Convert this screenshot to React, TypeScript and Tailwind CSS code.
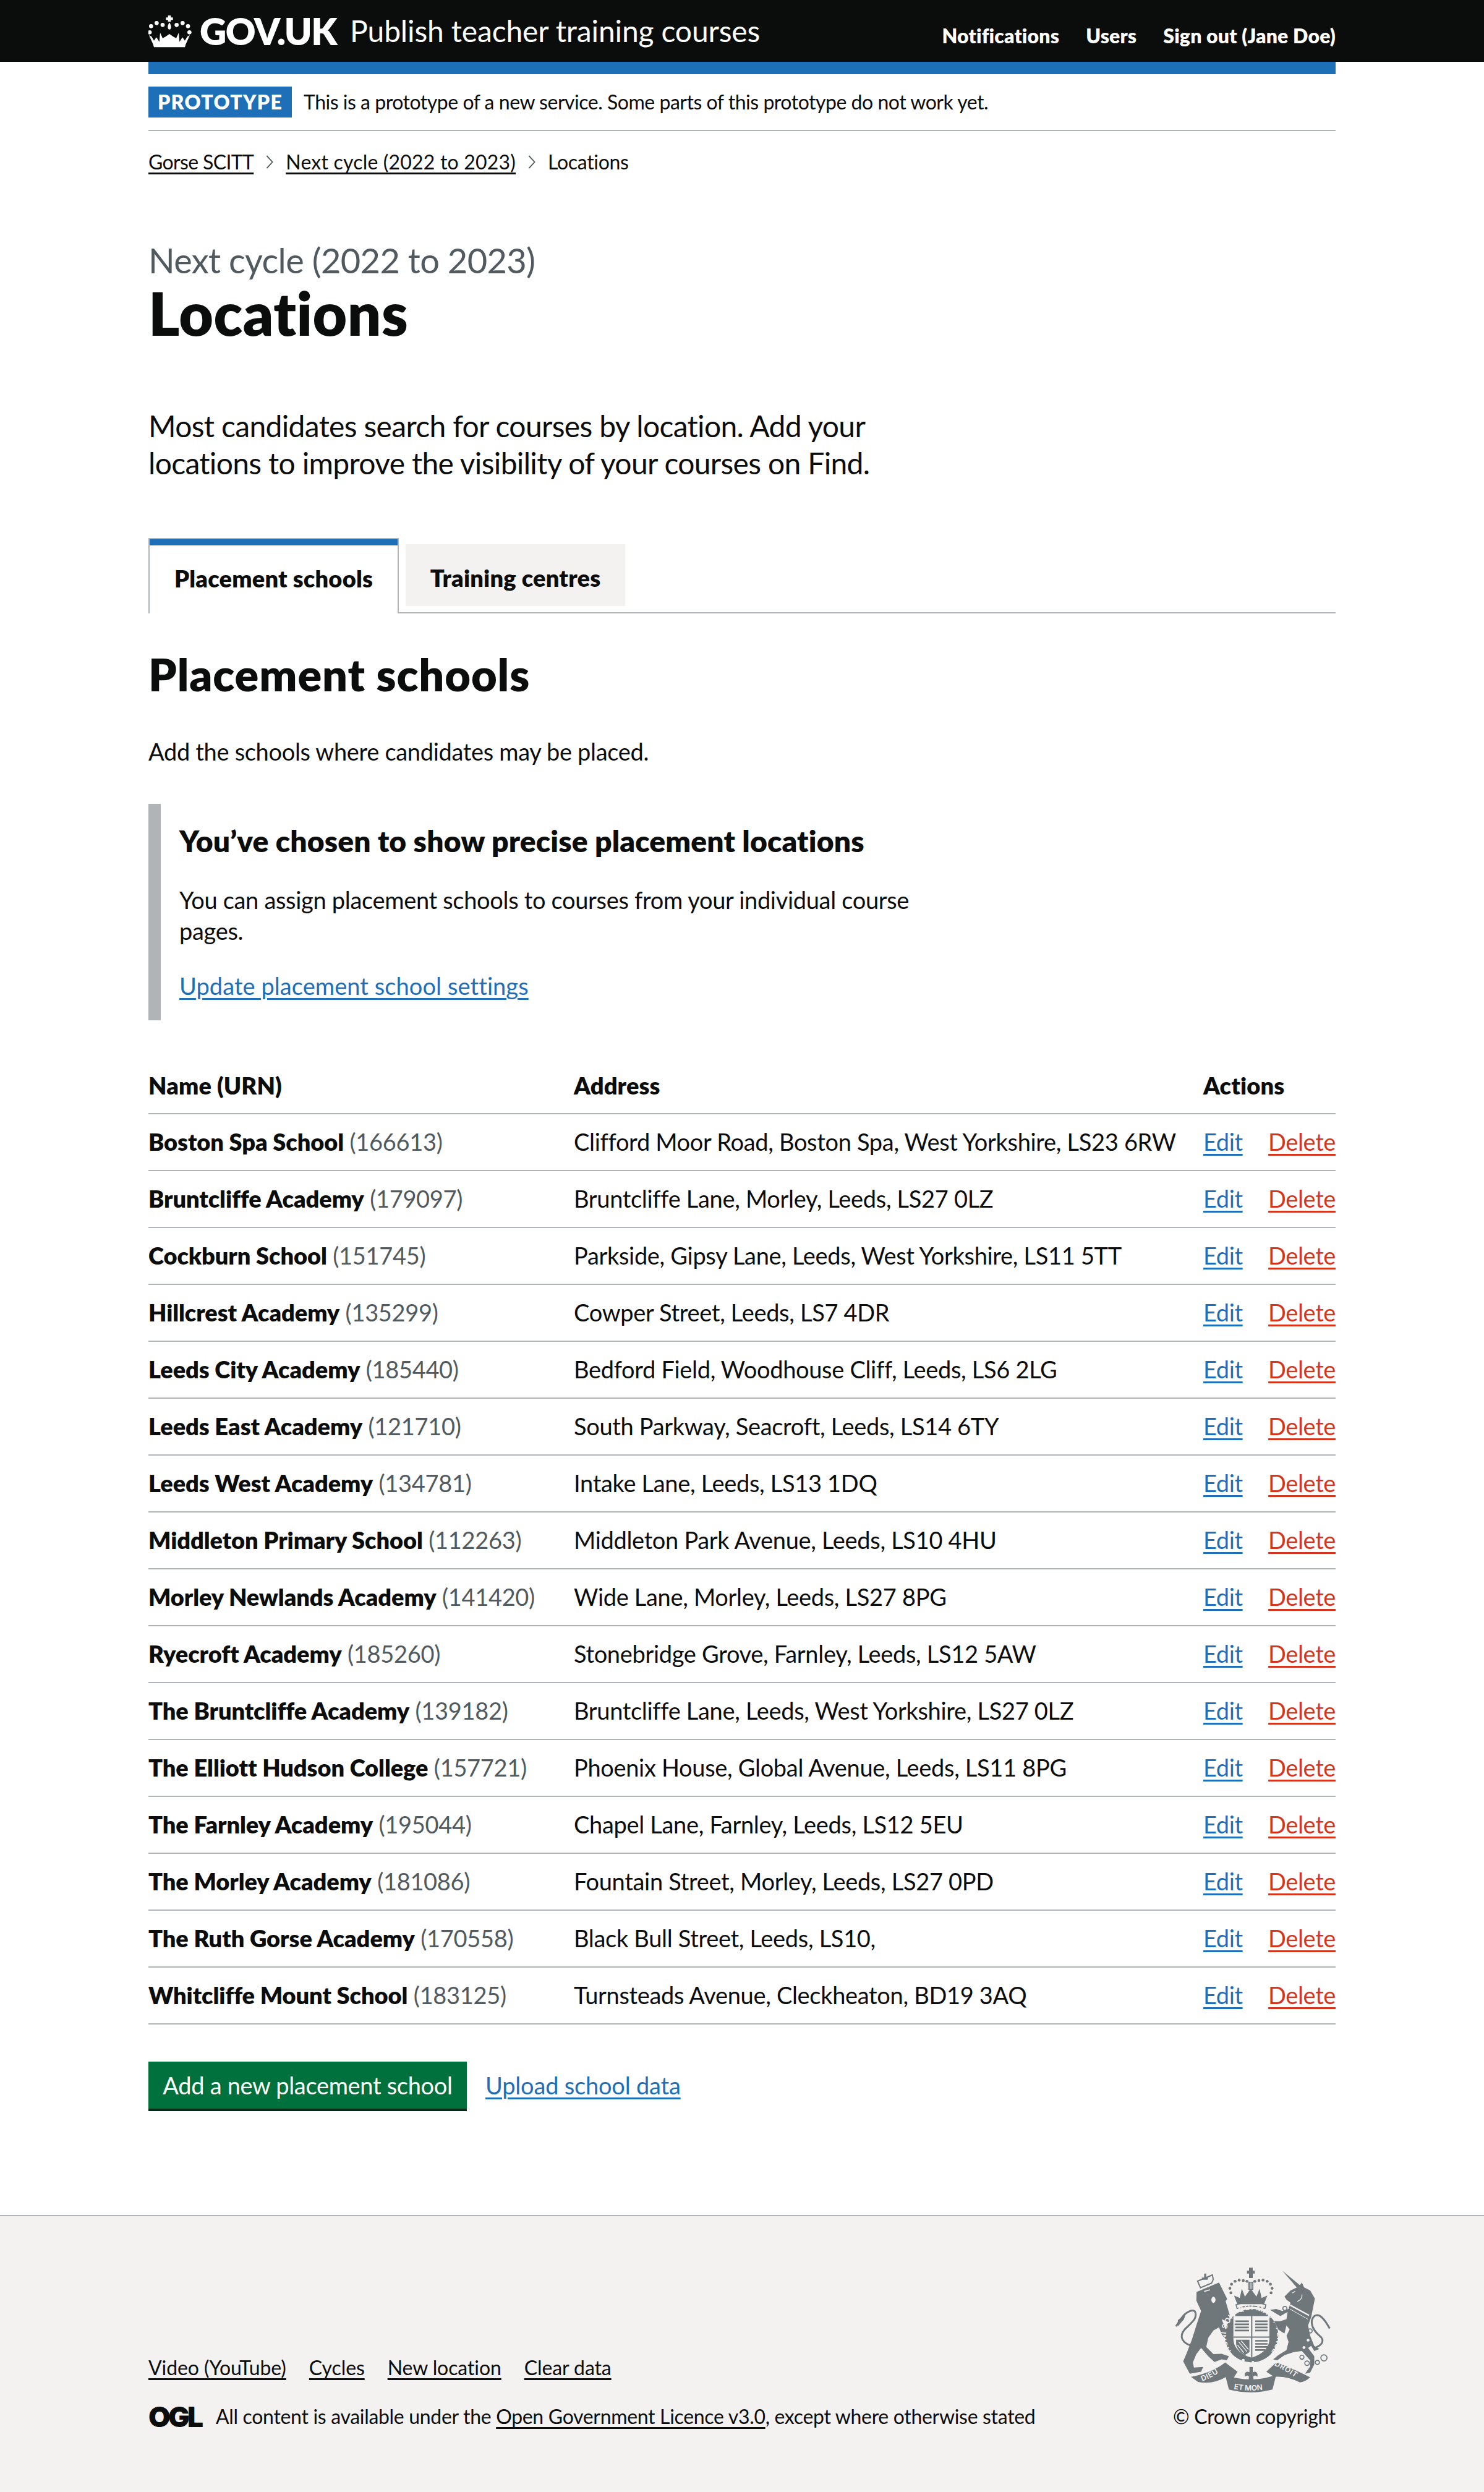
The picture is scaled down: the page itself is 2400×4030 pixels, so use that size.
const schools = [
  ['Boston Spa School', '166613', 'Clifford Moor Road, Boston Spa, West Yorkshire, LS23 6RW'],
  ['Bruntcliffe Academy', '179097', 'Bruntcliffe Lane, Morley, Leeds, LS27 0LZ'],
  ['Cockburn School', '151745', 'Parkside, Gipsy Lane, Leeds, West Yorkshire, LS11 5TT'],
  ['Hillcrest Academy', '135299', 'Cowper Street, Leeds, LS7 4DR'],
  ['Leeds City Academy', '185440', 'Bedford Field, Woodhouse Cliff, Leeds, LS6 2LG'],
  ['Leeds East Academy', '121710', 'South Parkway, Seacroft, Leeds, LS14 6TY'],
  ['Leeds West Academy', '134781', 'Intake Lane, Leeds, LS13 1DQ'],
  ['Middleton Primary School', '112263', 'Middleton Park Avenue, Leeds, LS10 4HU'],
  ['Morley Newlands Academy', '141420', 'Wide Lane, Morley, Leeds, LS27 8PG'],
  ['Ryecroft Academy', '185260', 'Stonebridge Grove, Farnley, Leeds, LS12 5AW'],
  ['The Bruntcliffe Academy', '139182', 'Bruntcliffe Lane, Leeds, West Yorkshire, LS27 0LZ'],
  ['The Elliott Hudson College', '157721', 'Phoenix House, Global Avenue, Leeds, LS11 8PG'],
  ['The Farnley Academy', '195044', 'Chapel Lane, Farnley, Leeds, LS12 5EU'],
  ['The Morley Academy', '181086', 'Fountain Street, Morley, Leeds, LS27 0PD'],
  ['The Ruth Gorse Academy', '170558', 'Black Bull Street, Leeds, LS10,'],
  ['Whitcliffe Mount School', '183125', 'Turnsteads Avenue, Cleckheaton, BD19 3AQ'],
];

const linkLine = 'underline decoration-[3px] underline-offset-[5px]';

function CrownLogo() {
  return (
    <svg viewBox="35 30 210 165" className="h-[55px] w-[70px]" fill="#fff">
      <path d="M130 36h14v10h10v12h-10v8h-14v-8h-10V46h10z" />
      <path d="M137 70c6 10 8 16 8 22s-3 12-8 12-8-6-8-12 2-12 8-22z" />
      <circle cx="48" cy="88" r="10" />
      <circle cx="75" cy="73" r="10" />
      <circle cx="104" cy="82" r="10" />
      <circle cx="172" cy="82" r="10" />
      <circle cx="201" cy="73" r="10" />
      <circle cx="227" cy="88" r="10" />
      <circle cx="41" cy="118" r="10" />
      <circle cx="234" cy="118" r="10" />
      <path d="M38 132l12 6 12 20 12-16 14 22 4-44 12 26 12-6 21-14 21 14 12 6 12-26 4 44 14-22 12 16 12-20 12-6-20 44-4 14H62l-4-14z" />
    </svg>
  );
}

function Crest() {
  return (
    <svg viewBox="155 130 765 625" className="h-[208px] w-[255px] mr-[6px]" fill="#6f777b">
      <defs>
        <path id="garter" d="M432 545A124 124 0 1 1 622 552" />
        <path id="ribbon-left" d="M290 692Q350 670 405 625" />
        <path id="ribbon-mid" d="M440 728Q525 745 615 728" />
        <path id="ribbon-right" d="M640 615Q700 640 770 695" />
      </defs>

      {/* lion */}
      <path d="M263 258L372 212 412 292 404 302 424 370 420 405 385 390 408 450 432 478 415 495 388 470 372 430 345 445 320 480 310 525 345 560 385 558 420 570 410 590 385 585 350 598 320 570 285 530 262 560 245 600 250 625 295 622 285 645 230 655 198 595 215 555 240 490 262 420 285 350 262 300Z" />
      <path d="M245 520C195 510 175 475 205 440 240 405 270 385 255 352 240 340 205 360 190 385L163 425" fill="none" stroke="#6f777b" strokeWidth="9" />
      <path d="M172 395l40-35-10 30-30 35z" />
      <ellipse cx="345" cy="296" rx="10" ry="15" fill="#f3f2f1" />
      <path d="M300 255l28-8" stroke="#f3f2f1" strokeWidth="5" />
      <path d="M268 205l72-30 4 22-8 18-54 22z" fill="none" stroke="#6f777b" strokeWidth="6" />
      <path d="M288 188h12v-20h-6 16v20h10l-4 10h-24z" />

      {/* royal crown */}
      <path d="M518 140h18v14h10v14h-10v22h-18v-22h-10v-14h10z" />
      <path d="M515 208h24v40h-24z" />
      <path d="M524 212v32M532 212v32" stroke="#f3f2f1" strokeWidth="3" />
      <g>
        {[[430,262],[425,240],[433,220],[450,206],[470,200],[490,202],[508,206],[546,206],[566,202],[586,200],[606,206],[622,220],[630,240],[625,262]].map(([cx, cy]) => (
          <circle key={`${cx}-${cy}`} cx={cx} cy={cy} r="7" />
        ))}
      </g>
      <path d="M445 275l28 12 10-45 15 38 28-38 28 38 15-38 10 45 28-12-16 42H461z" />
      <path d="M455 320Q527 295 600 320L595 338Q527 315 460 338z" fill="none" stroke="#6f777b" strokeWidth="5" />

      {/* garter and shield */}
      <circle cx="530" cy="470" r="130" />
      <path d="M442 375h175v110c0 50-45 80-87 92-42-12-88-42-88-92z" fill="#f3f2f1" />
      <path d="M528 372h6v205h-6zM442 474h176v6H442z" />
      <path d="M452 400h65M448 415h70M452 430h65M448 445h70M548 400h60M548 415h60M548 430h60M548 445h60M548 495h60M548 510h60M548 525h60M548 540h50" stroke="#6f777b" strokeWidth="8" />
      <path d="M455 490h65v60l-22 14c-24-12-43-34-43-60z" />
      <path d="M468 500l40 48M480 495l35 42M462 515l30 38" stroke="#f3f2f1" strokeWidth="4" />
      <text fill="#f3f2f1" fontFamily="Inter, sans-serif" fontWeight="600" fontSize="36" letterSpacing="2">
        <textPath href="#garter">HONI SOIT QUI MAL Y PENSE</textPath>
      </text>
      <circle cx="490" cy="590" r="7" fill="#f3f2f1" />
      <circle cx="537" cy="600" r="7" fill="#f3f2f1" />

      {/* unicorn */}
      <path d="M680 155L765 225 775 212 785 235 815 250 838 290 830 330 820 380 805 420 815 470 835 520 860 535 835 545 820 520 805 530 835 570 835 610 815 650 790 655 815 620 815 590 775 545 735 550 690 565 655 590 635 585 660 565 700 540 710 500 700 470 715 440 700 420 690 460 660 440 640 400 670 400 700 390 705 355 670 375 620 345 650 340 680 350 710 340 720 310 700 295 690 280 720 250 750 236Z" />
      <path d="M718 322l92 50" stroke="#f3f2f1" strokeWidth="7" />
      <path d="M716 340l88 50" stroke="#f3f2f1" strokeWidth="3" />
      <path d="M742 255l-14 8M775 270q4 22-22 34" stroke="#f3f2f1" strokeWidth="4" fill="none" />
      <path d="M835 530C880 515 885 490 860 470 825 440 810 400 835 375 860 358 885 390 910 435" fill="none" stroke="#6f777b" strokeWidth="9" />
      <g fill="none" stroke="#6f777b" strokeWidth="5">
        <circle cx="692" cy="338" r="10" />
        <circle cx="682" cy="422" r="10" />
        <circle cx="815" cy="447" r="10" />
        <circle cx="775" cy="575" r="10" />
        <circle cx="800" cy="604" r="11" />
        <circle cx="850" cy="600" r="10" />
        <circle cx="882" cy="578" r="15" />
      </g>
      <circle cx="805" cy="492" r="7" fill="#f3f2f1" />
      <circle cx="785" cy="528" r="7" fill="#f3f2f1" />

      {/* motto */}
      <path d="M236 670Q340 650 402 600L462 645 440 680 412 668Q340 710 270 695z" />
      <path d="M402 660Q525 705 650 660L632 732Q525 760 420 732z" />
      <path d="M602 645L650 600Q710 620 815 672 790 695 765 697 700 665 640 670z" />
      <path d="M520 622h16v26c14-8 28 4 22 22-8-8-14-8-20 0 4 10 0 22-10 28-10-6-14-18-10-28-6-8-12-8-20 0-6-18 8-30 22-22z" />
      <g fill="#f3f2f1" fontFamily="Inter, sans-serif" fontWeight="600" fontSize="36">
        <text><textPath href="#ribbon-left" letterSpacing="2">DIEU</textPath></text>
        <text><textPath href="#ribbon-mid" startOffset="4">ET MON</textPath></text>
        <text><textPath href="#ribbon-right" letterSpacing="2">DROIT</textPath></text>
      </g>
    </svg>
  );
}

function Chevron() {
  return (
    <svg viewBox="0 0 14 24" className="h-[22px] w-[14px] mx-[19px]" fill="none" stroke="#505a5f" strokeWidth="2">
      <path d="M2 1l10 11L2 23" />
    </svg>
  );
}

export default function App() {
  return (
    <div className="font-['Lato',sans-serif] text-[#0b0c0c] bg-white tracking-[-0.02em]">
      <header className="h-[100px] bg-[#0b0c0c] text-white">
        <div className="mx-[240px] h-full flex items-center justify-between">
          <div className="flex items-center">
            <CrownLogo />
            <span className="ml-[13px] text-[60px] leading-[100px] font-extrabold tracking-[-0.025em]">GOV.UK</span>
            <span className="ml-[22px] text-[48px] leading-[100px] tracking-[-0.003em]">Publish teacher training courses</span>
          </div>
          <nav className="flex gap-[43px] text-[32px] font-extrabold leading-[100px] pt-[16px] tracking-[0.005em]">
            <span>Notifications</span>
            <span>Users</span>
            <span>Sign out (Jane Doe)</span>
          </nav>
        </div>
      </header>

      <div className="mx-[240px]">
        <div className="h-[20px] bg-[#1d70b8]" />
        <div className="flex items-center gap-[19px] py-[20px] border-b-2 border-[#b1b4b6] h-[92px]">
          <strong className="w-[232px] h-[50px] bg-[#1d70b8] text-white text-[32px] leading-[50px] font-extrabold text-center tracking-[0.04em]">PROTOTYPE</strong>
          <span className="text-[32px] leading-[50px] tracking-[-0.015em]">This is a prototype of a new service. Some parts of this prototype do not work yet.</span>
        </div>

        <nav className="mt-[30px] flex items-center text-[32px] leading-[40px]">
          <a className={`${linkLine} tracking-[-0.02em]`}>Gorse SCITT</a>
          <Chevron />
          <a className={`${linkLine} tracking-[0.006em]`}>Next cycle (2022 to 2023)</a>
          <Chevron />
          <span>Locations</span>
        </nav>

        <main>
          <p className="mt-[109px] text-[56px] leading-[60px] text-[#505a5f] tracking-[-0.012em]">Next cycle (2022 to 2023)</p>
          <h1 className="mt-[5px] text-[96px] leading-[100px] font-extrabold tracking-[0.005em]">Locations</h1>
          <p className="mt-[103px] text-[48px] leading-[60px] w-[1260px] tracking-[-0.014em]">
            Most candidates search for courses by location. Add your locations to improve the visibility of your courses on Find.
          </p>

          <div className="mt-[91px] flex items-end h-[122px] border-b-2 border-[#b1b4b6]">
            <div className="w-[405px] h-[122px] -mb-[2px] bg-white border-x-2 border-t-2 border-[#b1b4b6] relative z-10">
              <div className="h-[10px] bg-[#1d70b8]" />
              <div className="text-center text-[38px] font-extrabold leading-[106px] tracking-[0.005em]">Placement schools</div>
            </div>
            <div className="ml-[11px] mb-[10px] w-[355px] h-[100px] bg-[#f3f2f1] text-center text-[38px] font-extrabold leading-[108px] tracking-[0.005em]">Training centres</div>
          </div>

          <h2 className="mt-[58px] text-[72px] leading-[80px] font-extrabold tracking-[0.012em]">Placement schools</h2>
          <p className="mt-[60px] text-[38px] leading-[50px]">Add the schools where candidates may be placed.</p>

          <div className="mt-[60px] h-[350px] border-l-[20px] border-[#b1b4b6] pl-[30px] pt-[30px]">
            <h3 className="text-[48px] leading-[60px] font-extrabold tracking-[0.003em]">You’ve chosen to show precise placement locations</h3>
            <p className="mt-[40px] text-[38px] leading-[50px] w-[1260px]">
              You can assign placement schools to courses from your individual course pages.
            </p>
            <p className="mt-[39px] text-[38px] leading-[50px]">
              <a className={`${linkLine} text-[#1d70b8] tracking-[0.002em]`}>Update placement school settings</a>
            </p>
          </div>

          <table className="mt-[79px] w-[1920px] table-fixed border-collapse text-[38px] leading-[50px]">
            <colgroup>
              <col className="w-[688px]" />
              <col className="w-[1018px]" />
              <col className="w-[214px]" />
            </colgroup>
            <thead>
              <tr className="border-b-2 border-[#b1b4b6] h-[72px]">
                <th className="p-0 pb-[20px] text-left font-extrabold tracking-[0.003em]">Name (URN)</th>
                <th className="p-0 pb-[20px] text-left font-extrabold tracking-[0.003em]">Address</th>
                <th className="p-0 pb-[20px] text-left font-extrabold tracking-[0.003em]">Actions</th>
              </tr>
            </thead>
            <tbody>
              {schools.map(([name, urn, address]) => (
                <tr key={urn} className="border-b-2 border-[#b1b4b6] h-[92px]">
                  <td className="p-0 pb-[2px] whitespace-nowrap">
                    <span className="font-extrabold tracking-[-0.002em]">{name}</span> <span className="text-[#505a5f]">({urn})</span>
                  </td>
                  <td className="p-0 pb-[2px] whitespace-nowrap">{address}</td>
                  <td className="p-0 pb-[2px]">
                    <div className="flex justify-between tracking-[-0.01em]">
                      <a className={`${linkLine} text-[#1d70b8]`}>Edit</a>
                      <a className={`${linkLine} text-[#d4351c]`}>Delete</a>
                    </div>
                  </td>
                </tr>
              ))}
            </tbody>
          </table>

          <div className="mt-[60px] flex items-start gap-[30px] text-[38px]">
            <a className="w-[515px] h-[80px] bg-[#00703c] border-b-4 border-[#002d18] text-white text-center leading-[76px]">Add a new placement school</a>
            <a className={`${linkLine} text-[#1d70b8] leading-[76px] tracking-[-0.005em]`}>Upload school data</a>
          </div>
        </main>
      </div>

      <footer className="mt-[168px] h-[449px] bg-[#f3f2f1] border-t-2 border-[#b1b4b6]">
        <div className="mx-[240px] h-full flex justify-between">
          <div className="pt-[225px] text-[32px] leading-[40px]">
            <div className="flex gap-[37px] tracking-[-0.003em]">
              <a className={linkLine}>Video (YouTube)</a>
              <a className={linkLine}>Cycles</a>
              <a className={linkLine}>New location</a>
              <a className={linkLine}>Clear data</a>
            </div>
            <div className="mt-[39px] flex items-center tracking-[-0.01em]">
              <span className="w-[109px] font-['Inter',sans-serif] font-black text-[46px] leading-[40px] tracking-[-0.08em]">OGL</span>
              All content is available under the&nbsp;<a className={linkLine}>Open Government Licence v3.0</a>, except where otherwise stated
            </div>
          </div>
          <div className="pt-[80px] flex flex-col items-end text-[32px] leading-[40px]">
            <Crest />
            <span className="mt-[16px]">© Crown copyright</span>
          </div>
        </div>
      </footer>
    </div>
  );
}
